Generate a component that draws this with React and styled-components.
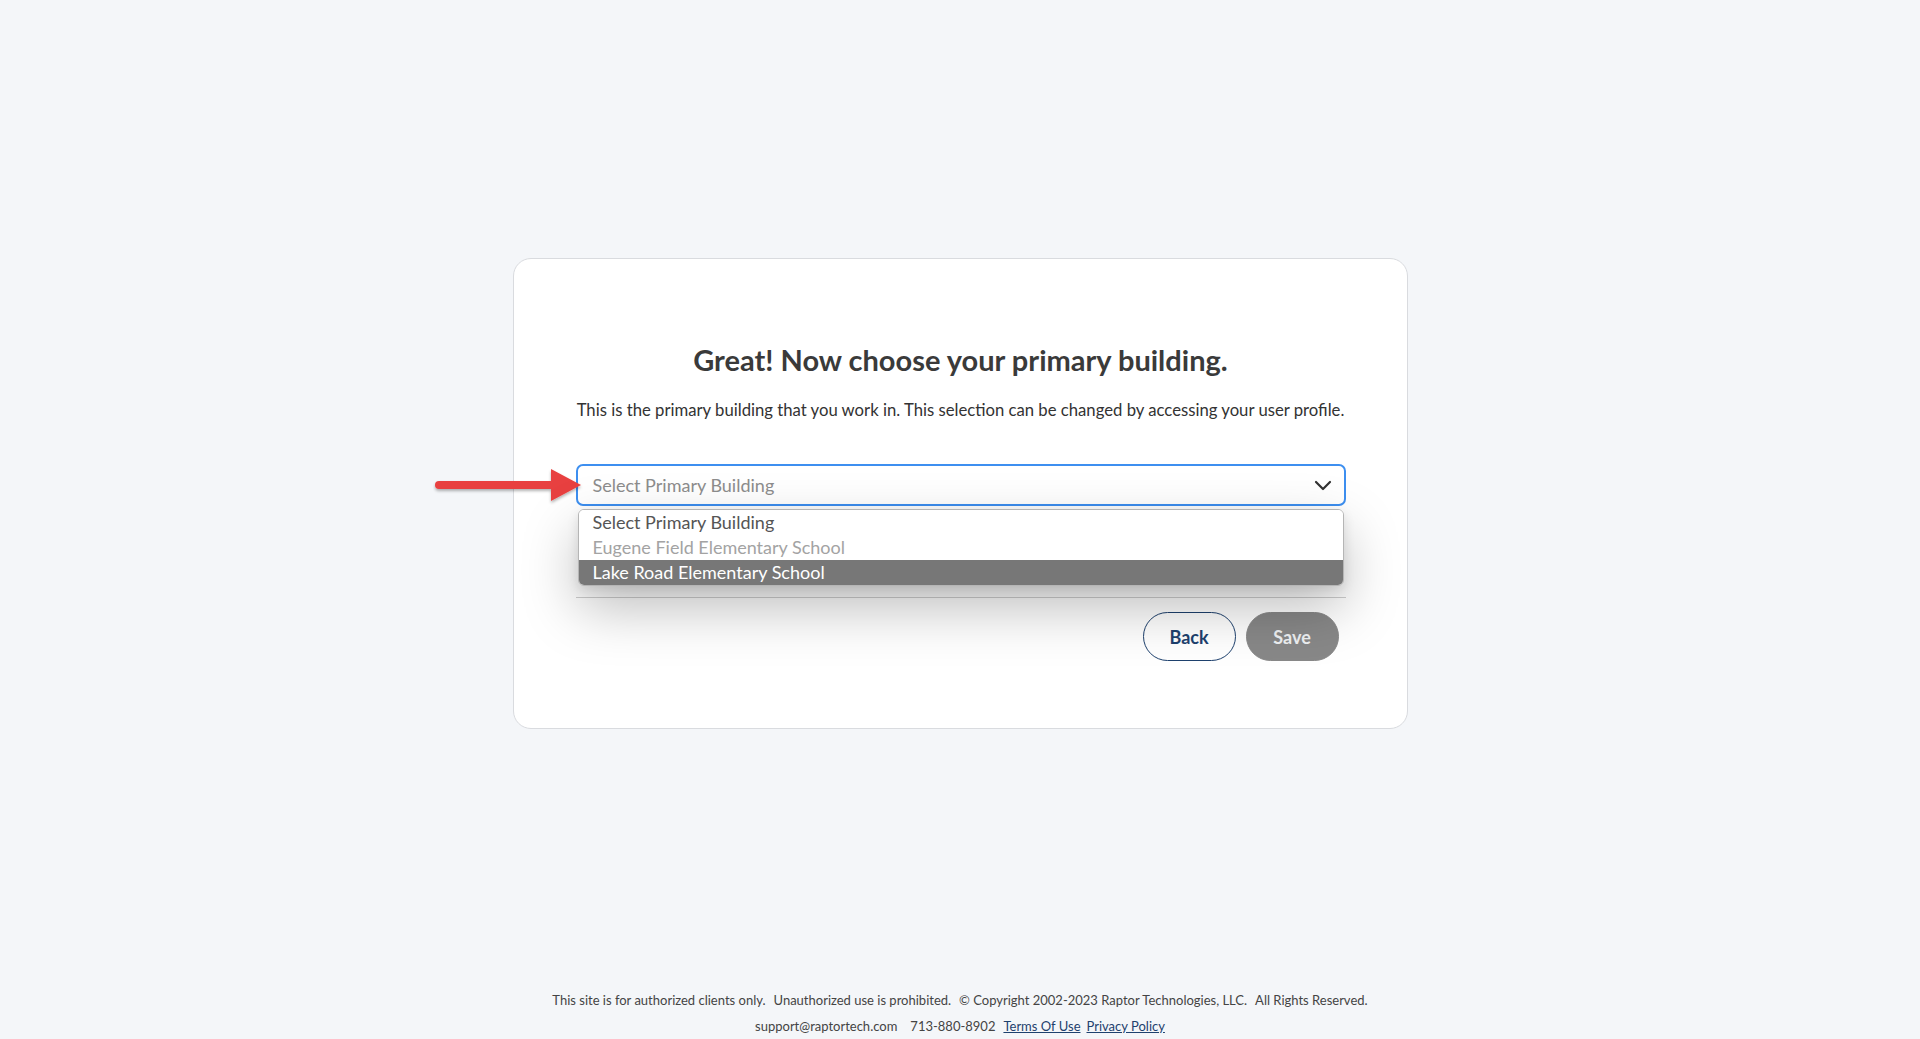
import React from 'react'
import styled, { createGlobalStyle } from 'styled-components'

const GlobalStyle = createGlobalStyle`
  html, body {
    margin: 0;
    padding: 0;
    background: #f4f6f9;
    font-family: "Source Sans Pro", Lato, "Liberation Sans", sans-serif;
    color: #333;
  }
  #root {
    min-height: 1039px;
  }
`

const options = [
  { label: "Select Primary Building", tone: "normal" },
  { label: "Eugene Field Elementary School", tone: "muted" },
  { label: "Lake Road Elementary School", tone: "active" }
]

function Arrow() {
  return (
    <ArrowMark width="152" height="40" viewBox="0 0 152 40">
      <defs>
        <filter id="arrowShadow" x="-10%" y="-30%" width="120%" height="160%">
          <feDropShadow dx="0" dy="2" stdDeviation="1.5" floodColor="#000" floodOpacity="0.3" />
        </filter>
      </defs>
      <g filter="url(#arrowShadow)">
        <path d="M6 16 H120 V24 H6 A4 4 0 0 1 6 16 Z" fill="#e8403f" />
        <path d="M118 4 L148 20 L118 36 Z" fill="#e8403f" />
      </g>
    </ArrowMark>
  )
}

function App() {
  return (
    <Page>
      <GlobalStyle />
      <Main>
        <Card>
          <Title>Great! Now choose your primary building.</Title>
          <Lead>
            This is the primary building that you work in. This selection can be changed by accessing your user profile.
          </Lead>
          <SelectWrap>
            <Arrow />
            <SelectBox>
              <Placeholder>Select Primary Building</Placeholder>
              <svg width="18" height="11" viewBox="0 0 18 11" fill="none">
                <path d="M2 2 L9 9 L16 2" stroke="#333" strokeWidth="2.2" strokeLinecap="round" strokeLinejoin="round" />
              </svg>
            </SelectBox>
            <OptionList>
              {options.map((item, index) => (
                <Option key={index} $tone={item.tone}>{item.label}</Option>
              ))}
            </OptionList>
          </SelectWrap>
          <Divider />
          <Actions>
            <BackButton>Back</BackButton>
            <SaveButton>Save</SaveButton>
          </Actions>
        </Card>
      </Main>
      <Footer>
        <FooterLine>
          <span>This site is for authorized clients only.</span>
          <span>Unauthorized use is prohibited.</span>
          <span>© Copyright 2002-2023 Raptor Technologies, LLC.</span>
          <span>All Rights Reserved.</span>
        </FooterLine>
        <FooterLine>
          <span>support@raptortech.com</span>
          <Phone>713-880-8902</Phone>
          <LinkRow>
            <FooterLink href="#">Terms Of Use</FooterLink>
            <FooterLink href="#">Privacy Policy</FooterLink>
          </LinkRow>
        </FooterLine>
      </Footer>
    </Page>
  )
}

export default App

const Page = styled.div`
  height: 1039px;
  display: flex;
  flex-direction: column;
  overflow: hidden;
`

const Main = styled.main`
  flex: 1;
  display: flex;
  align-items: center;
  justify-content: center;
`

const Card = styled.section`
  width: 895px;
  box-sizing: border-box;
  background: #fff;
  border: 1px solid #d9dbdf;
  border-radius: 18px;
  padding: 82px 61px 67px 62px;
`

const Title = styled.h1`
  margin: 0;
  text-align: center;
  font-size: 29px;
  font-weight: 700;
  color: #3a3a3a;
  line-height: 38px;
`

const Lead = styled.p`
  margin: 20px 0 0;
  text-align: center;
  font-size: 16.7px;
  color: #333;
  line-height: 22px;
  white-space: nowrap;
`

const SelectWrap = styled.div`
  position: relative;
  margin-top: 43px;
`

const ArrowMark = styled.svg`
  position: absolute;
  left: -143px;
  top: 1px;
`

const SelectBox = styled.div`
  height: 42px;
  box-sizing: border-box;
  border: 2px solid #3d8ff0;
  border-radius: 7px;
  display: flex;
  align-items: center;
  justify-content: space-between;
  padding: 0 12px 0 15px;
  background: #fff;
`

const Placeholder = styled.span`
  font-size: 18px;
  color: #8d8d8d;
`

const OptionList = styled.div`
  position: absolute;
  left: 2px;
  right: 2px;
  top: 45px;
  background: #fff;
  border: 1px solid #b5b5b5;
  border-radius: 6px;
  overflow: hidden;
  box-shadow: 0 22px 55px rgba(0, 0, 0, 0.26), 0 4px 12px rgba(0, 0, 0, 0.1);
  z-index: 2;
`

const Option = styled.div`
  height: 25px;
  line-height: 25px;
  padding-left: 14px;
  font-size: 18px;
  color: ${p => p.$tone === 'muted' ? '#a3a3a3' : p.$tone === 'active' ? '#fff' : '#555'};
  background: ${p => p.$tone === 'active' ? '#777' : '#fff'};
`

const Divider = styled.hr`
  margin: 91px 0 0;
  border: none;
  border-top: 1px solid #cfcfcf;
`

const Actions = styled.div`
  display: flex;
  justify-content: flex-end;
  gap: 10px;
  margin-top: 14px;
  padding-right: 7px;
`

const PillButton = styled.button`
  width: 93px;
  height: 49px;
  border-radius: 25px;
  font-family: inherit;
  font-size: 18px;
  font-weight: 700;
  cursor: pointer;
`

const BackButton = styled(PillButton)`
  background: #fff;
  border: 1px solid #1e416e;
  color: #1e416e;
`

const SaveButton = styled(PillButton)`
  background: #888;
  border: 1px solid #888;
  color: #eef0f2;
`

const Footer = styled.footer`
  display: flex;
  flex-direction: column;
  align-items: center;
`

const FooterLine = styled.div`
  display: flex;
  gap: 8px;
  font-size: 13px;
  line-height: 26px;
  color: #444;
`

const Phone = styled.span`
  margin-left: 5px;
`

const LinkRow = styled.span`
  display: flex;
  gap: 6px;
  margin-left: 0;
`

const FooterLink = styled.a`
  color: #1e416e;
  text-decoration: underline;
`
